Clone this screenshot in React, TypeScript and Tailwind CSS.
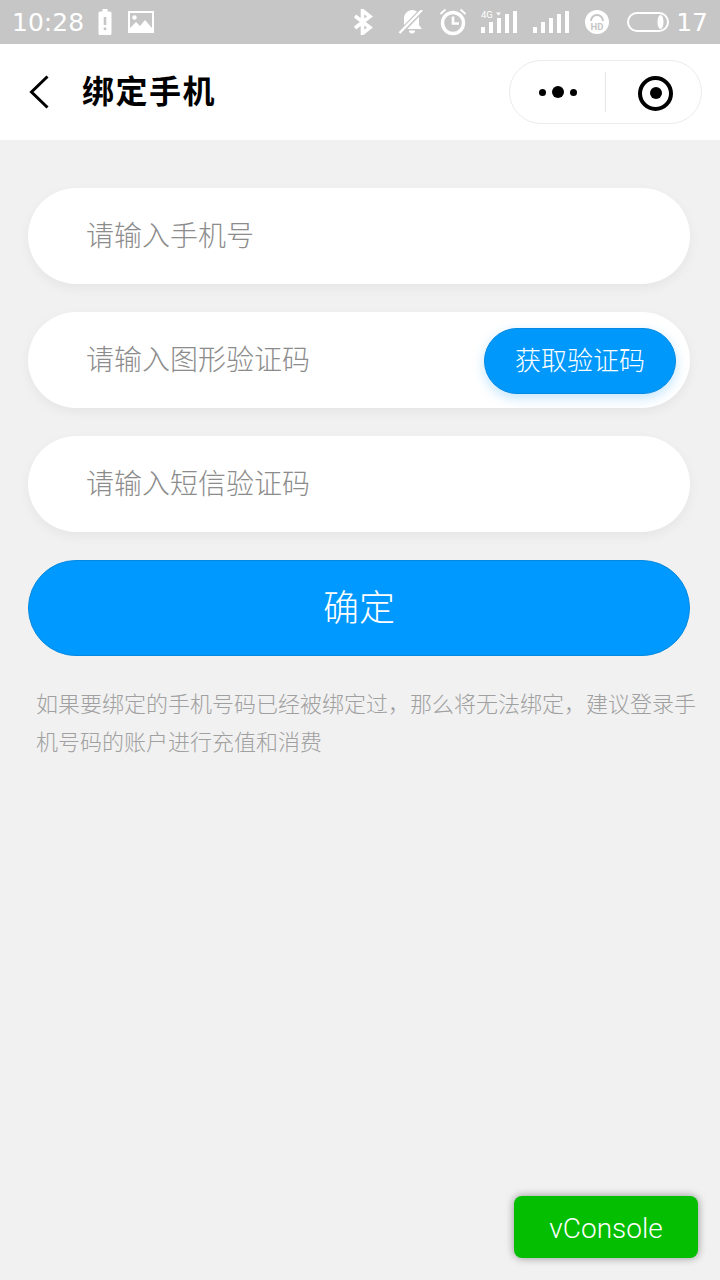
const cjk = 'font-["Noto_Sans_CJK_SC",sans-serif]';

function BatteryAlert() {
  return (
    <svg width="14" height="26" viewBox="0 0 14 26">
      <path d="M4.500 0h5v2.500H12A1.500 1.500 0 0 1 13.500 4v20.500A1.500 1.500 0 0 1 12 26H2A1.500 1.500 0 0 1 .5 24.500V4A1.500 1.500 0 0 1 2 2.500h2.500z" fill="#fff" />
      <rect x="5.700" y="8" width="2.600" height="8" fill="#c6c6c6" />
      <rect x="5.700" y="18.500" width="2.600" height="2.600" fill="#c6c6c6" />
    </svg>
  );
}

function PictureIcon() {
  return (
    <svg width="26" height="22" viewBox="0 0 26 22">
      <path fillRule="evenodd" d="M0 0h26v22H0z M2 2v15l6-6 4 4 5-6 7 8V2z" fill="#fff" />
      <circle cx="6.500" cy="6.500" r="2.200" fill="#fff" />
    </svg>
  );
}

function Bluetooth() {
  return (
    <svg width="20" height="26" viewBox="0 0 20 26" fill="none" stroke="#fff" strokeWidth="3.600">
      <path d="M2 7l15 11.500-7.500 6V1.500l7.500 6L2 19" />
    </svg>
  );
}

function BellOff() {
  return (
    <svg width="26" height="24" viewBox="0 0 26 24">
      <path d="M14 0c5 0 7 3.500 7 7v8l3 4H3l3-3V8c0-4 4-8 8-8z" fill="#fff" />
      <path d="M11 20.500h6a3 3 0 0 1-6 0z" fill="#fff" />
      <path d="M25 -1L1 24" stroke="#c6c6c6" strokeWidth="5" />
      <path d="M24 0L1.500 23" stroke="#fff" strokeWidth="2.400" />
    </svg>
  );
}

function Alarm() {
  return (
    <svg width="28" height="28" viewBox="0 0 28 28" fill="none" stroke="#fff">
      <circle cx="14" cy="15" r="10.500" strokeWidth="3.400" />
      <path d="M14 8.500V15.500H20" strokeWidth="2.600" />
      <path d="M1.500 6l5-4.500M26.500 6l-5-4.500" strokeWidth="2" />
    </svg>
  );
}

function SignalBars({ label }: { label?: string }) {
  const bars = [
    { x: 0, h: 6 },
    { x: 8, h: 11 },
    { x: 16, h: 15 },
    { x: 24, h: 19 },
    { x: 32, h: 22 },
  ];
  return (
    <svg width="36" height="22" viewBox="0 0 36 22" className="overflow-visible">
      {bars.map((b) => (
        <rect key={b.x} x={b.x} y={22 - b.h} width="4" height={b.h} fill="#fff" />
      ))}
      {label && (
        <>
          <text x="0" y="7" fontSize="9.500" fill="#fff" fontFamily="Roboto, sans-serif">
            {label}
          </text>
          <path d="M15 1.500h5l-2.500 3z" fill="#fff" />
        </>
      )}
    </svg>
  );
}

function HdBadge() {
  return (
    <svg width="24" height="24" viewBox="0 0 24 24">
      <circle cx="12" cy="12" r="12" fill="#fff" />
      <path d="M6 11a6 6 0 0 1 12 0" fill="none" stroke="#c6c6c6" strokeWidth="2" />
      <text x="12" y="20" textAnchor="middle" fontSize="9.500" fontWeight="700" fill="#c6c6c6" fontFamily="Roboto, sans-serif">
        HD
      </text>
    </svg>
  );
}

function Battery() {
  return (
    <svg width="42" height="20" viewBox="0 0 42 20">
      <rect x="1" y="1" width="40" height="18" rx="9" fill="none" stroke="#fff" strokeWidth="2" />
      <ellipse cx="33.500" cy="10" rx="3" ry="7" fill="#fff" />
    </svg>
  );
}

function Field({ placeholder, children }: { placeholder: string; children?: React.ReactNode }) {
  return (
    <div className="flex h-24 items-center justify-between rounded-[48px] bg-white pl-[58px] pr-3.5 shadow-[0_4px_12px_rgba(0,0,0,0.05)]">
      <span className="pb-1 text-[28px] font-light leading-none text-[#8c8c8c]">{placeholder}</span>
      {children}
    </div>
  );
}

export default function App() {
  return (
    <div className={`relative flex h-[1280px] w-[720px] flex-col overflow-hidden bg-[#f1f1f1] ${cjk}`}>
      {/* status bar */}
      <div className="flex h-11 shrink-0 items-center justify-between bg-[#c6c6c6] pl-3 pr-3">
        <div className="flex items-center">
          <span className="font-['DejaVu_Sans',sans-serif] text-[25px] leading-none text-white">10:28</span>
          <span className="ml-[14px] flex"><BatteryAlert /></span>
          <span className="ml-4 flex"><PictureIcon /></span>
        </div>
        <div className="flex items-center">
          <Bluetooth />
          <span className="ml-[25px] flex"><BellOff /></span>
          <span className="ml-[15px] flex"><Alarm /></span>
          <span className="ml-3.5 flex"><SignalBars label="4G" /></span>
          <span className="ml-4 flex"><SignalBars /></span>
          <span className="ml-4 flex"><HdBadge /></span>
          <span className="ml-[18px] flex"><Battery /></span>
          <span className="ml-[7px] font-['DejaVu_Sans',sans-serif] text-[25px] leading-none text-white">17</span>
        </div>
      </div>

      {/* nav bar */}
      <div className="flex h-24 shrink-0 items-center justify-between bg-white pl-[29px] pr-[18px]">
        <div className="flex items-center">
          <svg width="20" height="34" viewBox="0 0 20 34" fill="none" stroke="#000" strokeWidth="3">
            <path d="M18.500 1.500L2.500 17l16 15.500" />
          </svg>
          <h1 className="ml-[33px] pb-1.5 text-[32px] font-bold leading-none tracking-[1.500px] text-black">绑定手机</h1>
        </div>
        <div className="flex h-16 w-[193px] items-center rounded-[32px] border border-[#ececec]">
          <div className="flex w-[95px] items-center justify-center gap-1.5">
            <span className="h-[7px] w-[7px] rounded-full bg-black" />
            <span className="h-3 w-3 rounded-full bg-black" />
            <span className="h-[7px] w-[7px] rounded-full bg-black" />
          </div>
          <div className="h-10 w-px bg-[#e5e5e5]" />
          <div className="flex flex-1 items-center justify-center pl-1 pt-0.5">
            <div className="flex h-[35px] w-[35px] items-center justify-center rounded-full border-[4px] border-black">
              <span className="h-3 w-3 rounded-full bg-black" />
            </div>
          </div>
        </div>
      </div>

      {/* form */}
      <div className="flex w-[662px] flex-col gap-7 ml-7 mt-12">
        <Field placeholder="请输入手机号" />
        <Field placeholder="请输入图形验证码">
          <button className="mt-0.5 flex h-[66px] w-[192px] items-center justify-center rounded-[33px] border border-[#0689e0] bg-[#0099fb] pb-1 text-[26px] font-light leading-none text-white shadow-[0_4px_12px_rgba(8,153,249,0.25)]">
            获取验证码
          </button>
        </Field>
        <Field placeholder="请输入短信验证码" />
        <button className="flex h-24 items-center justify-center rounded-[48px] border border-[#0689e0] bg-[#0099ff] pb-1.5 text-[36px] font-light leading-none text-white">
          确定
        </button>
      </div>

      <p className="ml-9 mt-[27px] w-[662px] text-[22px] font-light leading-[38px] text-[#a0a0a0]">
        如果要绑定的手机号码已经被绑定过，那么将无法绑定，建议登录手机号码的账户进行充值和消费
      </p>

      {/* floating vConsole button */}
      <div className="absolute bottom-[22px] right-[22px] flex h-[62px] w-[184px] items-center justify-center rounded-lg bg-[#04be02] pt-1 font-['Roboto',sans-serif] text-[28px] font-light leading-none text-white shadow-[0_0_8px_rgba(0,0,0,0.4)]">
        vConsole
      </div>
    </div>
  );
}
